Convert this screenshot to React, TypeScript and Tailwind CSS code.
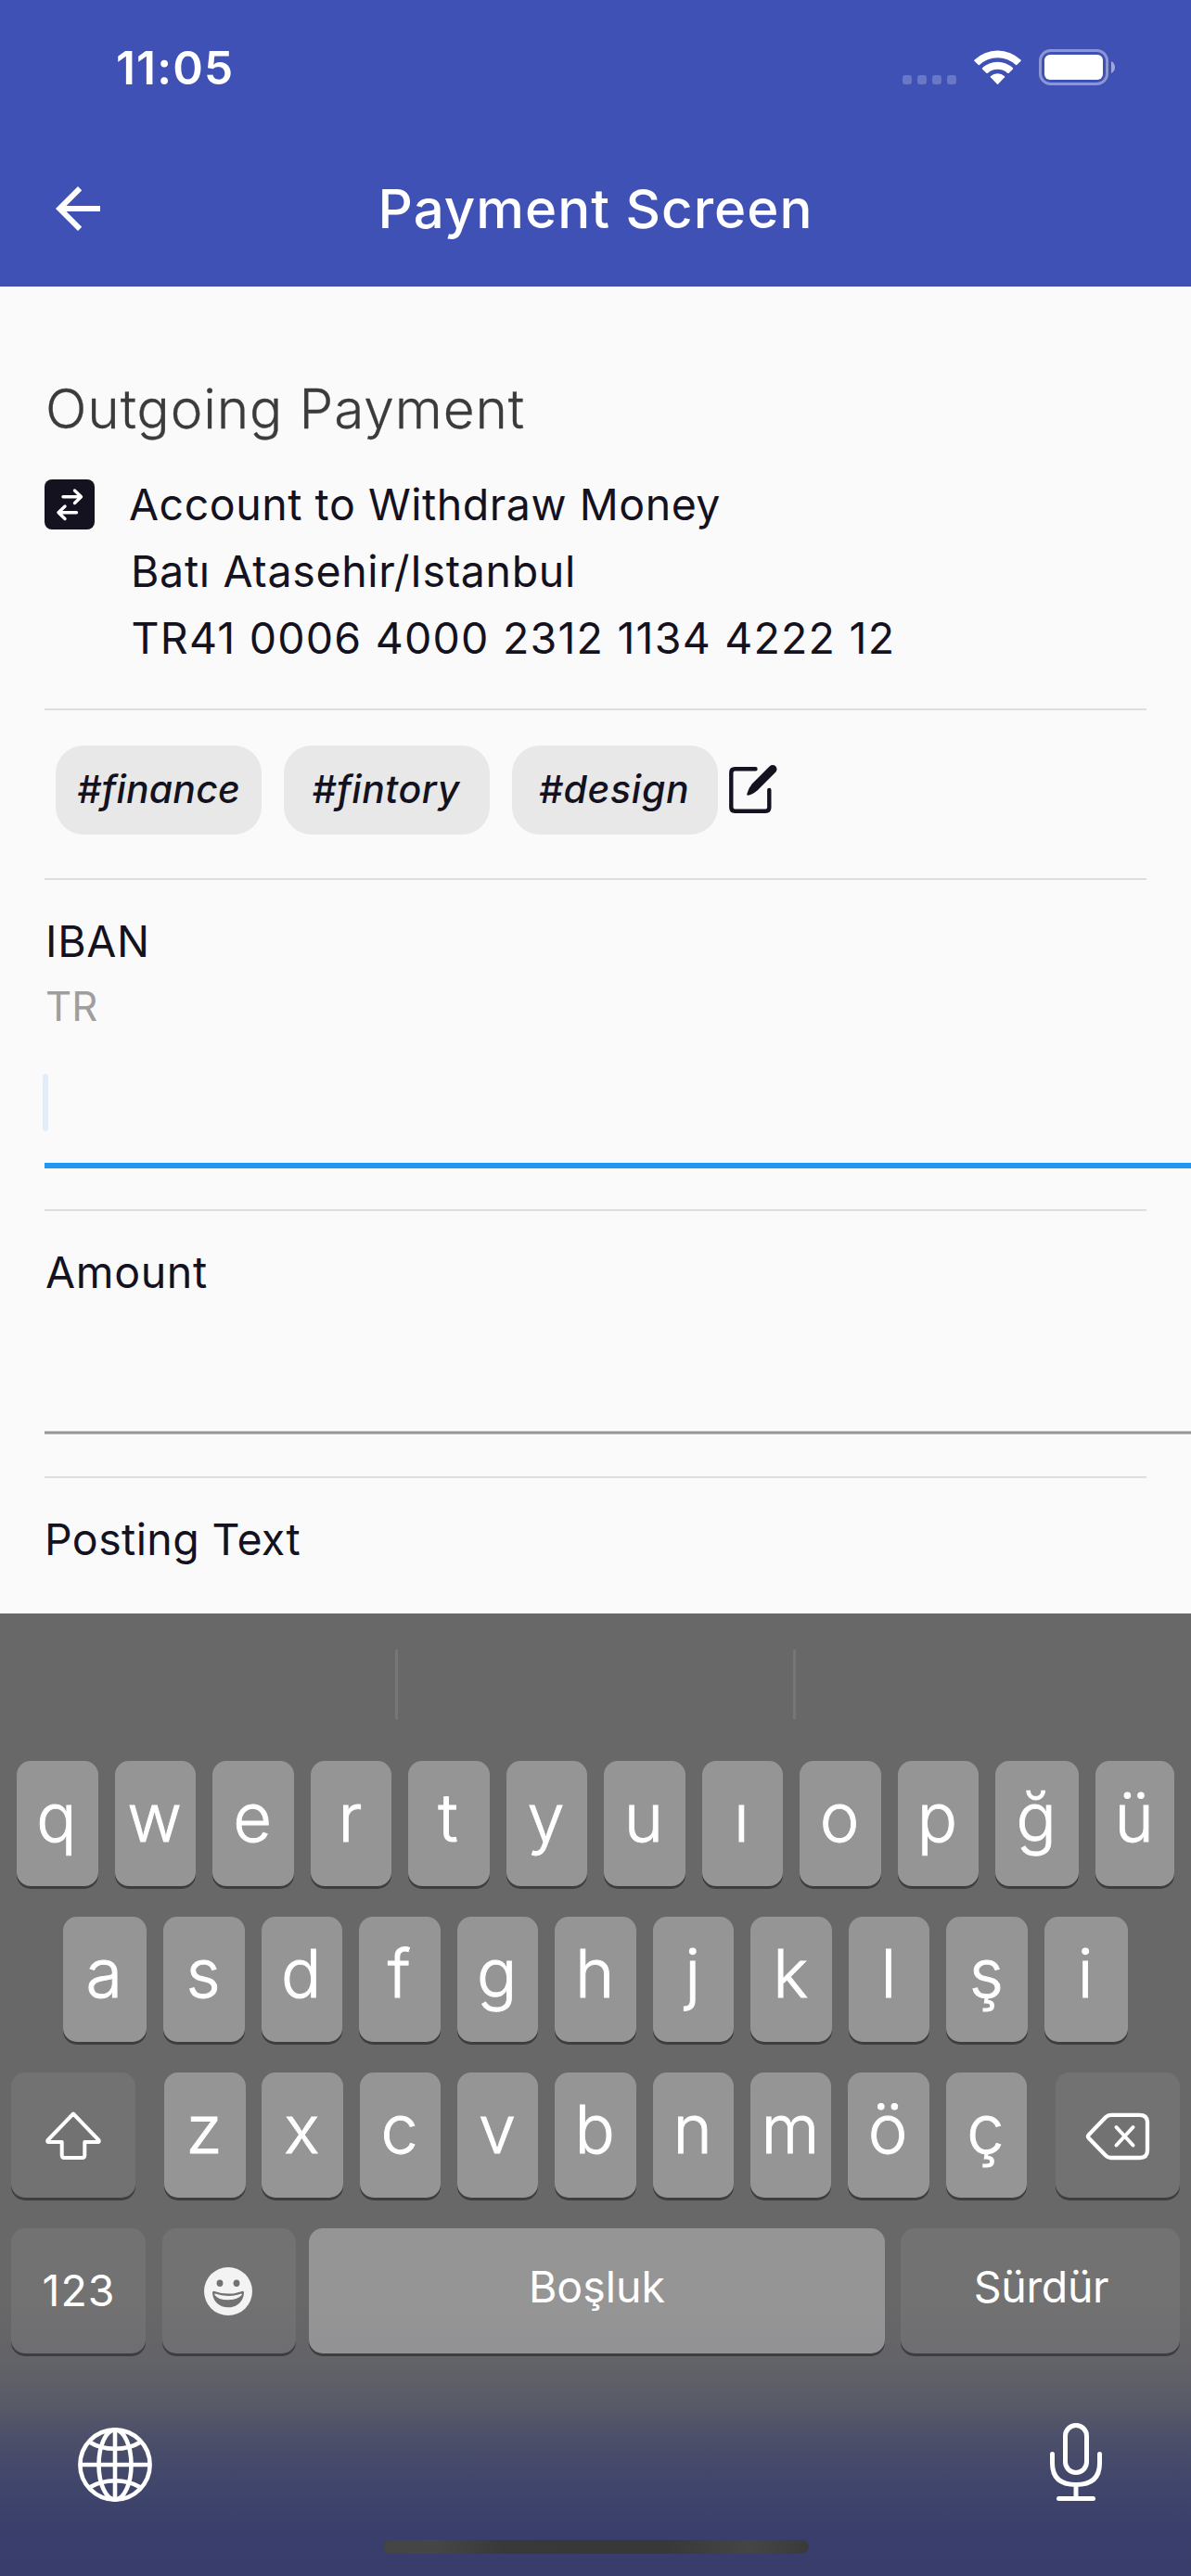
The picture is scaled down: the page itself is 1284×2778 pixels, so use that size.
import type { ReactNode } from "react";
import { MdArrowBack } from "react-icons/md";

type KeyDef = { label: string; width?: string };

const topRow: KeyDef[] = [
  ..."qwertyuıop".split("").map((label) => ({ label })),
  { label: "ğ", width: "w-[90px]" },
  { label: "ü", width: "w-[85px]" },
];
const homeRow: KeyDef[] = [
  { label: "a", width: "w-[90px]" },
  ..."sdfghjklş".split("").map((label) => ({ label })),
  { label: "i", width: "w-[90px]" },
];
const bottomRow: KeyDef[] = "zxcvbnmöç".split("").map((label) => ({ label }));

const tags = [
  { label: "#finance", tracking: "tracking-[0.16px]" },
  { label: "#fintory", tracking: "tracking-[0.5px] pr-[2px]" },
  { label: "#design", tracking: "tracking-[0.7px] pr-[2px]" },
];

function LetterKey({ label, width = "w-[87.5px]" }: KeyDef) {
  return (
    <div
      className={`${width} flex h-[135px] items-center justify-center rounded-[15px] bg-white/30 pr-[1.5px] pb-[13px] text-[72px] leading-none font-light shadow-[0_3px_0_#3e3e3f] [-webkit-text-stroke:0.9px_white]`}
    >
      {label}
    </div>
  );
}

function ActionKey({ className, children }: { className: string; children: ReactNode }) {
  return (
    <div
      className={`${className} flex h-[135px] items-center justify-center rounded-[15px] text-[46.5px] leading-none shadow-[0_3px_0_#3e3e3f]`}
    >
      {children}
    </div>
  );
}

function Divider({ className }: { className: string }) {
  return <div className={`${className} mr-12 h-[2px] bg-[#dedede]`} />;
}

function StatusBar() {
  return (
    <div className="flex h-[145px] items-center pr-[82px] pl-[125px]">
      <span className="flex-1 text-[49.5px] leading-[60px] font-semibold tracking-[1.18px]">11:05</span>
      <div className="mt-[27px] flex gap-[6px]">
        {[0, 1, 2, 3].map((i) => (
          <span key={i} className="size-[10px] rounded-[3px] bg-white/22" />
        ))}
      </div>
      <svg className="ml-[19px] h-[38px] w-[51px]" viewBox="0 0 51 38" fill="#fff">
        <path d="M0.3 10.7A36.2 36.2 0 0 1 50.7 10.7Q51 11.2 50.6 11.7L46.2 16Q45.6 16.4 45.1 16A28.4 28.4 0 0 0 5.9 16Q5.4 16.4 4.8 16L0.4 11.7Q0 11.2 0.3 10.7Z" />
        <path d="M9 19.3A24 24 0 0 1 42 19.3Q42.4 19.9 42 20.4L37.4 24.9Q36.9 25.3 36.3 24.9A16 16 0 0 0 14.7 24.9Q14.1 25.3 13.6 24.9L9 20.4Q8.6 19.9 9 19.3Z" />
        <path d="M17.9 28.2A11.4 11.4 0 0 1 33.1 28.2Q33.5 28.8 33.1 29.3L26 36.8Q25.5 37.3 25 36.8L17.9 29.3Q17.5 28.8 17.9 28.2Z" />
      </svg>
      <svg className="ml-[19px] h-[39px] w-[82px]" viewBox="0 0 82 39">
        <rect x="1.5" y="1.5" width="72" height="36" rx="11" fill="none" stroke="#fff" strokeOpacity="0.4" strokeWidth="3" />
        <rect x="6" y="6" width="63" height="27" rx="6" fill="#fff" />
        <path d="M78 13Q82 15.500 82 19.500T78 26Z" fill="#fff" fillOpacity="0.5" />
      </svg>
    </div>
  );
}

function TransferIcon() {
  return (
    <svg className="size-[54px]" viewBox="0 0 54 54">
      <rect width="54" height="54" rx="8" fill="#14121f" />
      <g fill="none" stroke="#fff" strokeWidth="3.400" strokeLinecap="round" strokeLinejoin="round">
        <path d="M20 18.700H39.500M32.500 12L39.500 18.700L32.500 25.500" />
        <path d="M34.500 35.800H15M22 29L15 35.800L22 42.500" />
      </g>
    </svg>
  );
}

function EditIcon() {
  return (
    <svg className="size-[72px]" viewBox="0 0 72 72">
      <path
        d="M40.500 13.300H18.300Q14.300 13.300 14.300 17.300V54.700Q14.300 58.700 18.300 58.700H51.300Q55.300 58.700 55.300 54.700V36"
        fill="none"
        stroke="#14121f"
        strokeWidth="4.400"
        strokeLinecap="round"
      />
      <path d="M59 13.500L40.500 32" stroke="#14121f" strokeWidth="9" strokeLinecap="round" />
      <path d="M37.300 28.800Q33 33.500 31.200 40.300Q31 41.900 32.600 41.700Q39.300 39.800 43.700 35.200Z" fill="#14121f" />
    </svg>
  );
}

function EmojiIcon() {
  return (
    <svg className="size-[52px]" viewBox="0 0 52 52">
      <circle cx="26" cy="26" r="26" fill="#f3f3f3" />
      <g fill="#727272">
        <ellipse cx="17" cy="17.300" rx="3.400" ry="3.700" />
        <ellipse cx="35" cy="17.300" rx="3.400" ry="3.700" />
        <path d="M9 27.500Q9 25.300 11.300 26Q18.500 28.600 26 28.600T40.700 26Q43 25.300 43 27.500C42.500 37 35.500 43.300 26 43.300S9.500 37 9 27.500Z" />
      </g>
      <path d="M12 28.600Q19 31 26 31T40 28.600Q41 28.500 40.700 29.800Q37 35.300 26 35.300T11.300 29.800Q11 28.500 12 28.600Z" fill="#f3f3f3" />
    </svg>
  );
}

function GlobeIcon() {
  return (
    <svg className="size-[80px]" viewBox="0 0 80 80" fill="none" stroke="#fff" strokeWidth="4.600">
      <circle cx="40" cy="40" r="37.600" />
      <ellipse cx="40" cy="40" rx="17.500" ry="37.600" />
      <path d="M40 2.400V77.600M2.400 40H77.600" />
      <path d="M12.500 15.500Q24 22.800 40 22.800T67.500 15.500M12.500 64.500Q24 57.200 40 57.200T67.500 64.500" />
    </svg>
  );
}

function MicIcon() {
  return (
    <svg
      className="h-[84px] w-[56px]"
      viewBox="0 0 56 84"
      fill="none"
      stroke="#fff"
      strokeWidth="5"
      strokeLinecap="round"
    >
      <rect x="16.500" y="2.500" width="23" height="51" rx="11.500" />
      <path d="M2.500 33.500V43.500Q2.500 66.500 28 66.500T53.500 43.500V33.500M28 66.500V81.500M9.500 81.500H46.500" />
    </svg>
  );
}

function Keyboard() {
  return (
    <section className="h-[1038px] bg-[linear-gradient(to_bottom,#686868_0px,#686868_740px,#636368_805px,#595b67_850px,#4d5069_885px,#40466b_940px,#393e6b_990px,#393d6b_1038px)] text-white">
      <div className="flex h-[159px] justify-center gap-[426px] pt-[39px]">
        <div className="h-[75px] w-[3px] bg-[#767676]" />
        <div className="h-[75px] w-[3px] bg-[#767676]" />
      </div>
      <div className="flex flex-col gap-[33px]">
        <div className="flex justify-between px-[18px]">
          {topRow.map((k) => (
            <LetterKey key={k.label} {...k} />
          ))}
        </div>
        <div className="flex justify-between px-[68px]">
          {homeRow.map((k) => (
            <LetterKey key={k.label} {...k} />
          ))}
        </div>
        <div className="flex justify-between px-[12px]">
          <ActionKey className="w-[134px] bg-white/[0.066]">
            <svg className="h-[52px] w-[60px]" viewBox="0 0 60 52" fill="none" stroke="#fff" strokeWidth="4" strokeLinejoin="round">
              <path d="M30 2.500L57.500 31Q58.300 33 56.500 33H42.300V47.300Q42.300 50 39.600 50H20.400Q17.700 50 17.700 47.300V33H3.500Q1.700 33 2.500 31Z" />
            </svg>
          </ActionKey>
          <div className="flex w-[930px] justify-between">
            {bottomRow.map((k) => (
              <LetterKey key={k.label} {...k} />
            ))}
          </div>
          <ActionKey className="w-[134px] bg-white/[0.066]">
            <svg
              className="mt-[3px] h-[52px] w-[70px]"
              viewBox="0 0 70 52"
              fill="none"
              stroke="#fff"
              strokeWidth="4.300"
              strokeLinecap="round"
              strokeLinejoin="round"
            >
              <path d="M27.500 2.800H58.500Q67 2.800 67 11V41Q67 49 58.500 49H27.500Q24.500 49 22 46.500L4 28Q2 26 4 24L22 5.200Q24.500 2.800 27.500 2.800Z" />
              <path d="M33.500 16L51.500 35.500M51.500 16L33.500 35.500" strokeWidth="4" />
            </svg>
          </ActionKey>
        </div>
        <div className="flex px-[12px]">
          <ActionKey className="w-[145px] bg-white/[0.066] pl-[1px] tracking-[1px]">123</ActionKey>
          <ActionKey className="ml-[18px] w-[144px] bg-white/[0.066] pr-[2px]">
            <EmojiIcon />
          </ActionKey>
          <ActionKey className="ml-[14px] w-[621px] bg-white/30 pb-[8px]">Boşluk</ActionKey>
          <ActionKey className="ml-[17px] w-[301px] bg-white/[0.066] pb-[8px] pl-[2px] tracking-[-0.35px]">Sürdür</ActionKey>
        </div>
      </div>
      <div className="flex justify-between px-[84px] pt-[75px]">
        <div className="pt-[5px]">
          <GlobeIcon />
        </div>
        <div className="mr-[12px]">
          <MicIcon />
        </div>
      </div>
      <div className="mx-auto mt-[41px] h-[15px] w-[459px] rounded-full bg-[linear-gradient(to_right,#444444,#464646_12%,#393939_28%,#383838_66%,#454545_86%,#3a3a3a)]" />
    </section>
  );
}

export default function App() {
  return (
    <div className="h-[2778px] w-[1284px] overflow-hidden bg-[#fafafa] font-['Inter','Liberation_Sans',sans-serif] text-[#14121f]">
      <header className="h-[309px] bg-[#3f51b5] text-white">
        <StatusBar />
        <div className="flex h-[160px] items-center px-12">
          <MdArrowBack className="size-[72px]" />
          <h1 className="flex-1 pr-[72px] text-center text-[58.2px] leading-[80px] font-medium tracking-[1px]">
            Payment Screen
          </h1>
        </div>
      </header>

      <main className="h-[1431px] overflow-hidden pl-12 text-[46.5px] leading-[72px]">
        <h2 className="mt-[88px] pl-[1px] text-[58.5px] leading-[88px] font-light tracking-[0.9px] text-[#3b3b3b] [-webkit-text-stroke:0.3px_#3b3b3b]">
          Outgoing Payment
        </h2>
        <div className="mt-[23px] flex items-center gap-[37px]">
          <TransferIcon />
          <p className="tracking-[0.53px]">Account to Withdraw Money</p>
        </div>
        <p className="pl-[93px] tracking-[0.67px]">Batı Atasehir/Istanbul</p>
        <p className="pl-[93.5px] tracking-[1.22px]">TR41 0006 4000 2312 1134 4222 12</p>
        <Divider className="mt-[40px]" />

        <div className="mt-[38px] flex items-center pl-[12px]">
          <div className="flex gap-[24px] text-[41px] leading-none font-medium italic">
            {tags.map((tag) => (
              <span
                key={tag.label}
                className={`${tag.tracking} flex h-[96px] w-[222px] items-center justify-center rounded-[30px] bg-[#e8e8e8] pb-[2px]`}
              >
                {tag.label}
              </span>
            ))}
          </div>
          <EditIcon />
        </div>
        <Divider className="mt-[47px]" />

        <p className="mt-[30px] pl-[1px] tracking-[0.67px]">IBAN</p>
        <p className="mt-[3px] pl-[1px] text-[43.6px] leading-[64px] text-[#9e9e9e]">TR</p>
        <div className="mt-[40px] -ml-[2px] h-[62px] w-[6px] rounded-full bg-[#e2edfa]" />
        <div className="mt-[34px] h-[6px] bg-[#2196f3]" />
        <Divider className="mt-[44px]" />

        <p className="mt-[30px] pl-[1px] tracking-[0.67px]">Amount</p>
        <div className="mt-[135px] h-[4px] border-y border-[#c4c4c4] bg-[#979797]" />
        <Divider className="mt-[45px]" />

        <p className="mt-[30px] tracking-[0.4px]">Posting Text</p>
      </main>

      <Keyboard />
    </div>
  );
}
